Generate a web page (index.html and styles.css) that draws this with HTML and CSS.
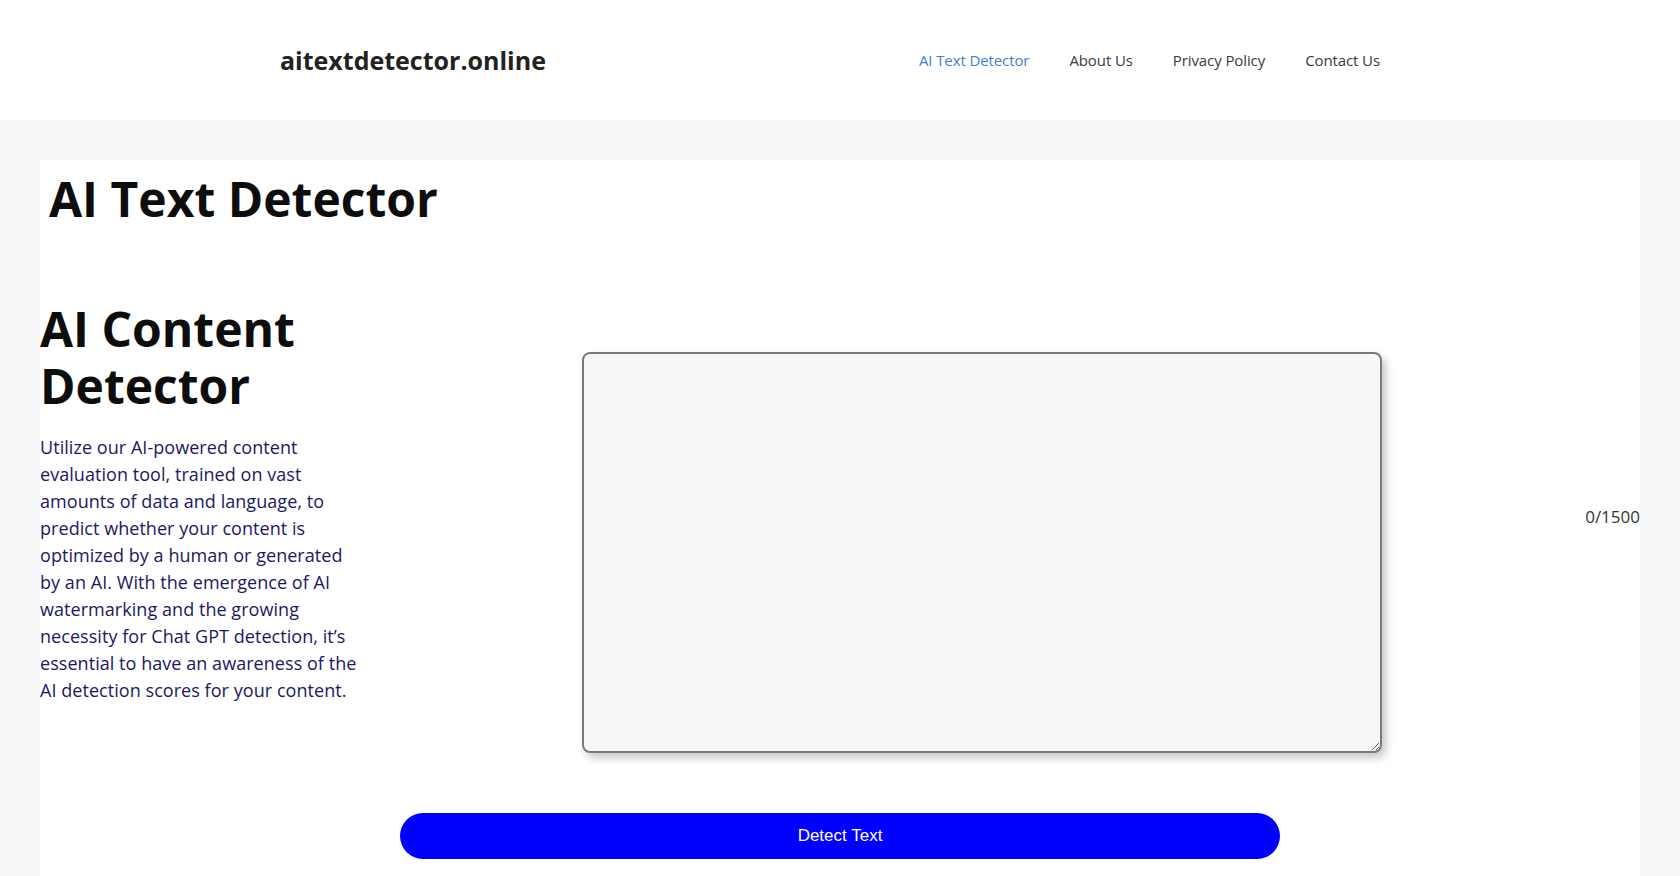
FILE: index.html
```html
<!DOCTYPE html>
<html lang="en">
<head>
    <meta charset="UTF-8">
    <meta name="viewport" content="width=device-width, initial-scale=1.0">
    <title>AI Text Detector</title>
    <link rel="stylesheet" href="styles.css">
</head>
<body>

    <header class="site-header">
        <div class="header-inner">
            <a class="site-title" href="#">aitextdetector.online</a>
            <nav class="main-nav">
                <a href="#" class="active">AI Text Detector</a>
                <a href="#">About Us</a>
                <a href="#">Privacy Policy</a>
                <a href="#">Contact Us</a>
            </nav>
        </div>
    </header>

    <main class="site-content">
        <article class="entry">
            <h1 class="entry-title">AI Text Detector</h1>

            <div class="detector-row">
                <div class="intro">
                    <h2>AI Content Detector</h2>
                    <p>Utilize our AI-powered content evaluation tool, trained on vast amounts of data and language, to predict whether your content is optimized by a human or generated by an AI. With the emergence of AI watermarking and the growing necessity for Chat GPT detection, it’s essential to have an awareness of the AI detection scores for your content.</p>
                </div>
                <textarea id="inputText" class="input-text" maxlength="1500" oninput="updateCount()"></textarea>
                <div class="char-count" id="charCount">0/1500</div>
            </div>

            <button class="detect-btn" onclick="detectText()">Detect Text</button>
        </article>
    </main>

    <script>
        function updateCount() {
            const text = document.getElementById('inputText').value;
            document.getElementById('charCount').innerText = text.length + "/1500";
        }

        function detectText() {
            const text = document.getElementById('inputText').value.trim();
            if (!text) {
                return;
            }
        }
    </script>

</body>
</html>
```

FILE: styles.css
```css
body {
    margin: 0;
    font-family: 'Open Sans', sans-serif;
    background: #f6f7f9;
    color: #3a3a3a;
}

a {
    text-decoration: none;
}

.site-header {
    background: #fff;
    height: 120px;
}

.header-inner {
    width: 1120px;
    height: 100%;
    margin: 0 auto;
    display: flex;
    align-items: center;
    justify-content: space-between;
}

.site-title {
    font-size: 25px;
    font-weight: 700;
    color: #222;
}

.main-nav {
    display: flex;
}

.main-nav a {
    padding: 0 20px;
    font-size: 15px;
    letter-spacing: -0.1px;
    color: #3a3a3a;
}

.main-nav a.active {
    color: #3f7fd3;
}

.site-content {
    padding: 40px 40px 0;
}

.entry {
    background: #fff;
    padding-bottom: 40px;
}

.entry-title {
    margin: 0;
    padding: 10px 0 0 9px;
    font-size: 48px;
    line-height: 1.2;
    color: #0d0d0d;
}

.detector-row {
    display: flex;
    align-items: flex-start;
    margin-top: 72px;
}

.intro {
    width: 320px;
    flex-shrink: 0;
}

.intro h2 {
    margin: 0;
    font-size: 48px;
    line-height: 1.2;
    color: #0d0d0d;
}

.intro p {
    margin: 19px 0 0;
    font-size: 18px;
    line-height: 27px;
    letter-spacing: 0.05px;
    color: #1c1862;
}

.input-text {
    box-sizing: border-box;
    width: 800px;
    height: 401px;
    margin: 52px 0 0 222px;
    border: 2px solid #7a7a7a;
    border-radius: 8px;
    background: #f6f7f9;
    box-shadow: 4px 5px 8px rgba(0, 0, 0, 0.22);
    font-family: inherit;
    font-size: 16px;
}

.char-count {
    margin: 204px 0 0 auto;
    font-size: 17px;
    line-height: 25px;
    color: #333;
}

.detect-btn {
    display: block;
    width: 55%;
    height: 46px;
    margin: 60px auto 0;
    background: #0000ff;
    color: #fff;
    border: none;
    border-radius: 23px;
    font-family: 'Liberation Sans', Arial, sans-serif;
    font-size: 17px;
    cursor: pointer;
}
```
